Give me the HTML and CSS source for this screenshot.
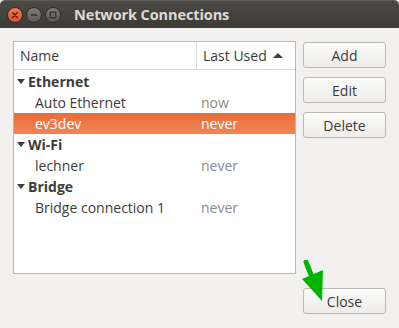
FILE: index.html
```html
<!DOCTYPE html>
<html lang="en">
<head>
  <meta charset="UTF-8" />
  <title>Network Connections</title>
  <link rel="stylesheet" href="styles.css">
</head>
<body>
  <div class="window">
    <div class="titlebar">
      <span class="wbtn close-btn">
        <svg width="16" height="16" viewBox="0 0 16 16"><path d="M5.5 5.5l5 5M10.5 5.5l-5 5" stroke="#3a1a10" stroke-width="1.6" stroke-linecap="round"/></svg>
      </span>
      <span class="wbtn">
        <svg width="16" height="16" viewBox="0 0 16 16"><path d="M4.5 8h7" stroke="#2f2e2b" stroke-width="1.6"/></svg>
      </span>
      <span class="wbtn">
        <svg width="16" height="16" viewBox="0 0 16 16"><rect x="4.8" y="4.8" width="6.4" height="6.4" fill="none" stroke="#2f2e2b" stroke-width="1.4"/></svg>
      </span>
      <span class="title">Network Connections</span>
    </div>

    <div class="content">
      <div class="main">
        <div class="tree">
          <div class="tree-head">
            <div class="col-name">Name</div>
            <div class="col-used">Last Used <span class="sort"></span></div>
          </div>
          <div class="row group"><span class="exp"></span>Ethernet</div>
          <div class="row"><span class="cell-name">Auto Ethernet</span><span class="cell-used">now</span></div>
          <div class="row selected"><span class="cell-name">ev3dev</span><span class="cell-used">never</span></div>
          <div class="row group"><span class="exp"></span>Wi-Fi</div>
          <div class="row"><span class="cell-name">lechner</span><span class="cell-used">never</span></div>
          <div class="row group"><span class="exp"></span>Bridge</div>
          <div class="row"><span class="cell-name">Bridge connection 1</span><span class="cell-used">never</span></div>
        </div>
        <div class="side">
          <button class="btn">Add</button>
          <button class="btn">Edit</button>
          <button class="btn">Delete</button>
        </div>
      </div>
      <div class="footer">
        <div class="close-wrap">
          <svg class="arrow" width="26" height="44" viewBox="0 0 26 44">
            <path d="M5 2 L13 22" stroke="#00b400" stroke-width="5" stroke-linecap="round"/>
            <path d="M1 19 L22 10 L21 41 Z" fill="#00b400"/>
          </svg>
          <button class="btn">Close</button>
        </div>
      </div>
    </div>
  </div>
</body>
</html>
```

FILE: styles.css
```css
body {
  margin: 0;
  background: #f2f1f0;
  font-family: "Open Sans", "DejaVu Sans", sans-serif;
  font-size: 14px;
  color: #3c3c3c;
}
.window {
  width: 399px;
  height: 328px;
  background: #f2f1f0;
}
.titlebar {
  height: 28px;
  background: linear-gradient(#4a4944, #3c3b37);
  border-top: 1px solid #5c5b56;
  box-sizing: border-box;
  display: flex;
  align-items: center;
  padding-left: 7px;
  gap: 3px;
  border-top-left-radius: 5px;
  border-top-right-radius: 5px;
}
.wbtn {
  width: 16px;
  height: 16px;
  border-radius: 50%;
  background: linear-gradient(#7d7c77, #5c5b56);
  border: 1px solid #2e2d29;
  display: flex;
  align-items: center;
  justify-content: center;
  box-sizing: border-box;
}
.close-btn {
  background: linear-gradient(#f47a50, #e2501f);
}
.title {
  margin-left: 10px;
  color: #dfdbd2;
  font-weight: bold;
  font-size: 14.5px;
  letter-spacing: -0.1px;
}
.content {
  padding: 13px 13px 0 13px;
}
.main {
  display: flex;
  gap: 7px;
}
.tree {
  width: 281px;
  height: 231px;
  background: #fff;
  border: 1px solid #bab8b4;
}
.tree-head {
  display: flex;
  height: 27px;
  border-bottom: 1px solid #dcdad5;
  align-items: center;
  margin-bottom: 1px;
}
.col-name {
  width: 176px;
  padding-left: 6px;
  border-right: 1px solid #dcdad5;
  line-height: 27px;
}
.col-used {
  padding-left: 6px;
  display: flex;
  align-items: center;
}
.sort {
  width: 0;
  height: 0;
  border-left: 5px solid transparent;
  border-right: 5px solid transparent;
  border-bottom: 5px solid #3c3c3c;
  margin-left: 6px;
}
.row {
  height: 21px;
  line-height: 21px;
  display: flex;
}
.group {
  font-weight: bold;
  padding-left: 2px;
}
.exp {
  width: 0;
  height: 0;
  border-left: 4px solid transparent;
  border-right: 4px solid transparent;
  border-top: 5px solid #3c3c3c;
  margin: 8px 3px 0 1px;
}
.cell-name {
  width: 166px;
  padding-left: 21px;
}
.cell-used {
  color: #8b8b8b;
}
.selected {
  background: linear-gradient(#e66d39, #f28556);
  color: #fff;
}
.selected .cell-used {
  color: #fff;
}
.side {
  display: flex;
  flex-direction: column;
  gap: 9px;
  padding-top: 1px;
}
.btn {
  width: 83px;
  height: 26px;
  font-family: inherit;
  font-size: 14px;
  color: #3c3c3c;
  background: linear-gradient(#fbfbfa, #eeedec);
  border: 1px solid #bbb9b5;
  border-radius: 3px;
  padding: 0;
}
.footer {
  display: flex;
  justify-content: flex-end;
  padding-top: 14px;
}
.close-wrap {
  position: relative;
}
.arrow {
  position: absolute;
  left: -2px;
  top: -28px;
}
```
